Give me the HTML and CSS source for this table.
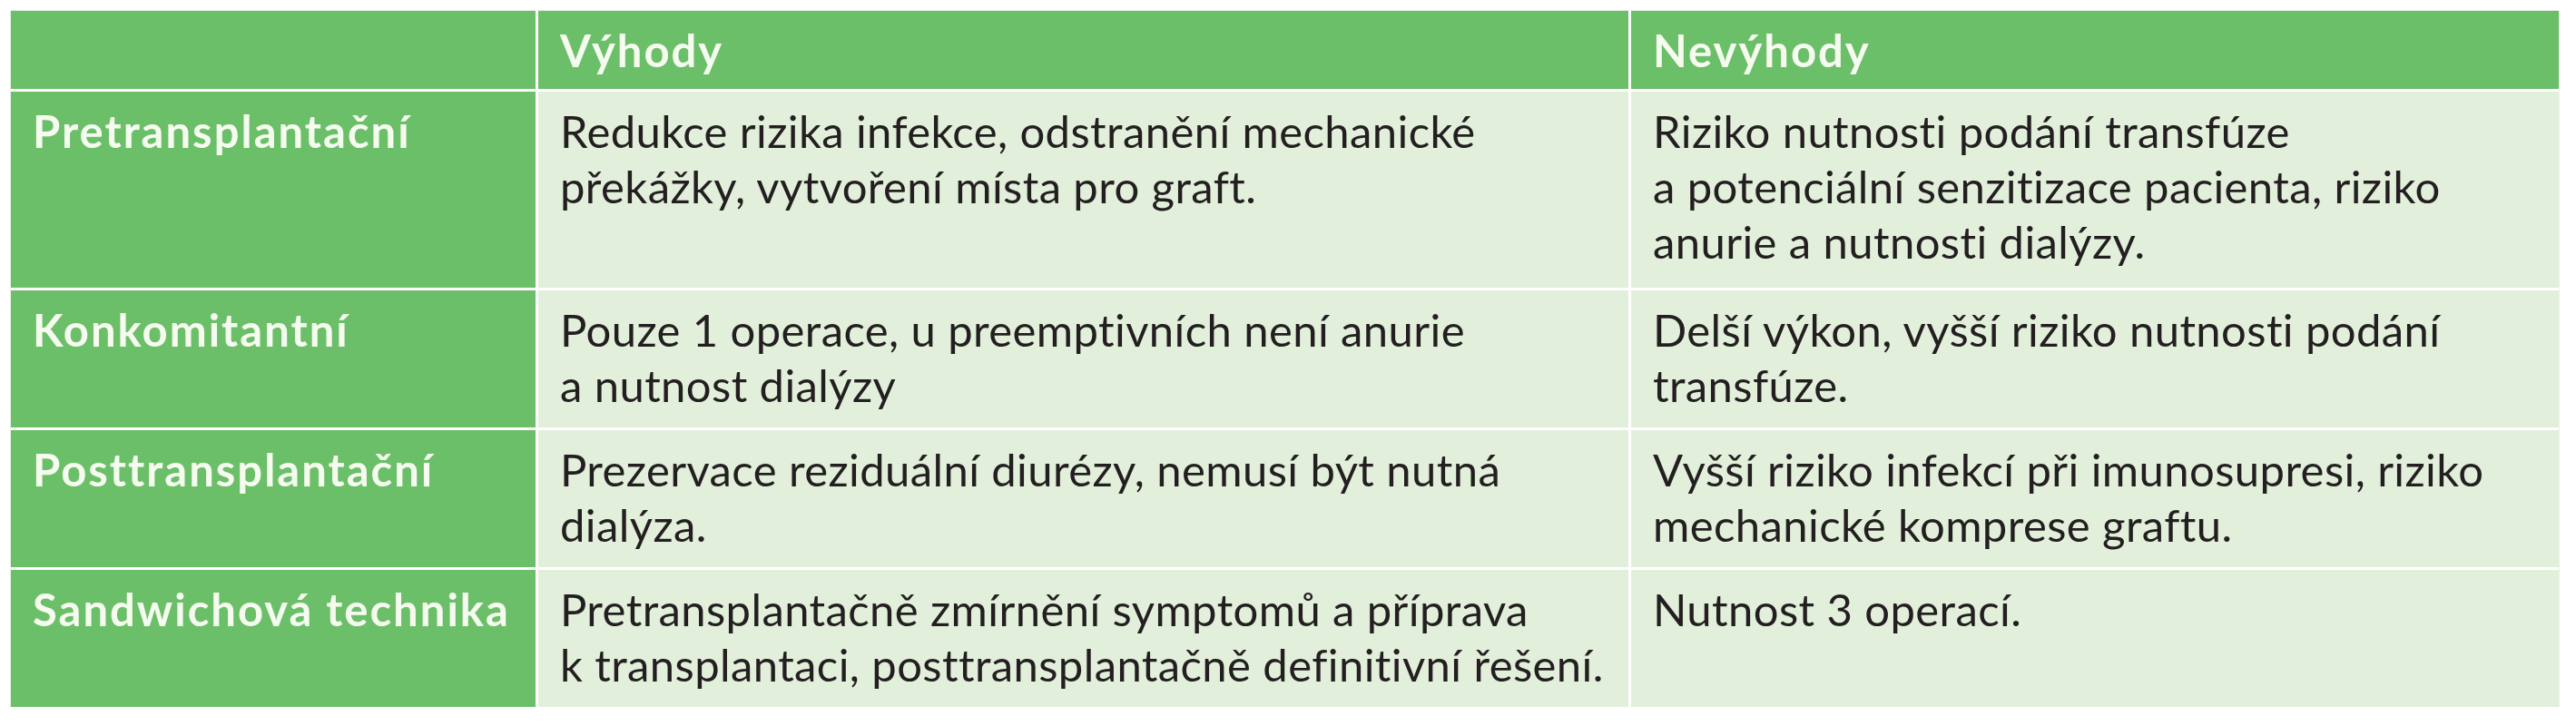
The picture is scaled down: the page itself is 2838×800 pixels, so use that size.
FILE: index.html
```html
<!DOCTYPE html>
<html lang="cs">
<head>
<meta charset="utf-8">
<title>Tabulka</title>
<link rel="stylesheet" href="styles.css">
</head>
<body>
<div class="table">
  <div class="cell head"></div>
  <div class="cell head">Výhody</div>
  <div class="cell head">Nevýhody</div>

  <div class="cell label">Pretransplantační</div>
  <div class="cell body">Redukce rizika infekce, odstranění mechanické<br>překážky, vytvoření místa pro graft.</div>
  <div class="cell body">Riziko nutnosti podání transfúze<br>a&nbsp;potenciální senzitizace pacienta, riziko<br>anurie a&nbsp;nutnosti dialýzy.</div>

  <div class="cell label">Konkomitantní</div>
  <div class="cell body">Pouze 1&nbsp;operace, u&nbsp;preemptivních není anurie<br>a&nbsp;nutnost dialýzy</div>
  <div class="cell body">Delší výkon, vyšší riziko nutnosti podání<br>transfúze.</div>

  <div class="cell label">Posttransplantační</div>
  <div class="cell body">Prezervace reziduální diurézy, nemusí být nutná<br>dialýza.</div>
  <div class="cell body">Vyšší riziko infekcí při imunosupresi, riziko<br>mechanické komprese graftu.</div>

  <div class="cell label">Sandwichová technika</div>
  <div class="cell body">Pretransplantačně zmírnění symptomů a&nbsp;příprava<br>k&nbsp;transplantaci, posttransplantačně definitivní řešení.</div>
  <div class="cell body">Nutnost 3&nbsp;operací.</div>
</div>
</body>
</html>
```
FILE: styles.css
```css
html, body {
  margin: 0;
  padding: 0;
  background: #ffffff;
}

body {
  padding: 12px 0 0 12px;
  font-family: Lato, "Open Sans", "DejaVu Sans", sans-serif;
}

.table {
  width: 2807px;
  display: grid;
  grid-template-columns: 578px 1201px 1fr;
  grid-template-rows: 86px 216px 151px 151px 151px;
  gap: 3px;
  background: #ffffff;
  box-shadow: 0 0 0 1px #e9f1e6;
}

.cell {
  padding: 13px 24px 0 24px;
  font-size: 49px;
  line-height: 61px;
  letter-spacing: 0.4px;
  white-space: nowrap;
}

.head {
  background: #6cbf69;
  color: #f6fbf0;
  font-weight: 700;
  letter-spacing: 2px;
  padding-top: 0;
  display: flex;
  align-items: center;
}

.label {
  background: #6cbf69;
  color: #f6fbf0;
  font-weight: 700;
  letter-spacing: 2px;
}

.body {
  background: #e2efdb;
  color: #231f20;
}
```
